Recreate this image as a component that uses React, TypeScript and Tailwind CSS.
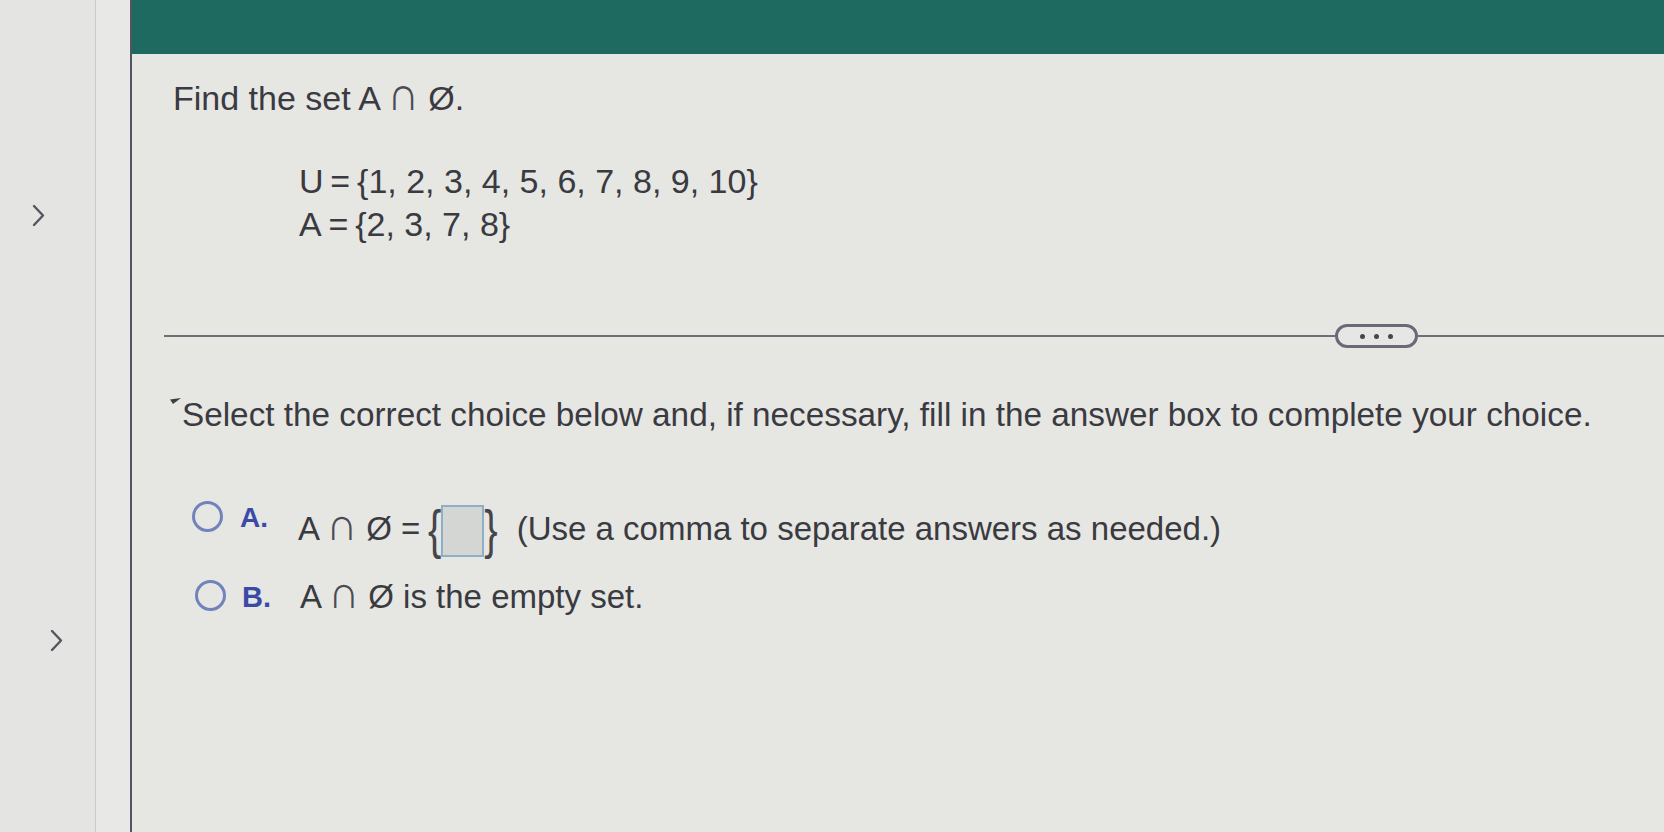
import React from 'react';

const font = { fontFamily: '"Liberation Sans", Arial, sans-serif' };
const mathSym = { fontFamily: '"DejaVu Sans", "Liberation Sans", sans-serif' };

function Chevron({ className }: { className?: string }) {
  return (
    <svg className={className} width="13" height="23" viewBox="0 0 13 23" fill="none">
      <path d="M2 2l9 9.5L2 21" stroke="#55555d" strokeWidth="2.4" strokeLinecap="round" strokeLinejoin="round" />
    </svg>
  );
}

function Radio({ className }: { className?: string }) {
  return <span className={`block w-[31px] h-[31px] rounded-full border-[3px] border-[#7083bb] shrink-0 ${className ?? ''}`} />;
}

// the reference draws ∩ about cap height with a thin stroke
function Cap() {
  return (
    <span style={mathSym} className="inline-block mx-[3px] font-extralight text-[#4b4b53] scale-x-[1.3] scale-y-[1.4] origin-[50%_79%]">
      ∩
    </span>
  );
}

export default function App() {
  return (
    <div className="w-[1664px] h-[832px] flex overflow-hidden bg-[#e4e4e2] text-[#3a3a41]" style={font}>
      {/* left nav rail */}
      <div className="w-[96px] shrink-0 flex flex-col border-r border-[#cacac7]">
        <div className="h-[204px] shrink-0" />
        <Chevron className="ml-[32px]" />
        <div className="h-[402px] shrink-0" />
        <Chevron className="ml-[50px]" />
      </div>
      <div className="w-[36px] shrink-0 bg-[#e8e8e6] border-r-2 border-[#545361]" />

      {/* main */}
      <div className="flex-1 flex flex-col bg-[#e6e6e3]">
        <div className="h-[54px] bg-[#1f6a60] shrink-0" />

        <div className="pl-[41px]">
          <h1 className="mt-[24px] text-[34px] leading-[40px] font-normal">
            Find the set A <Cap /> Ø.
          </h1>

          <div className="ml-[126px] mt-[42px] text-[34px] leading-[43px]">
            <div>U&thinsp;=&thinsp;{'{'}1, 2, 3, 4, 5, 6, 7, 8, 9, 10{'}'}</div>
            <div>A&thinsp;=&thinsp;{'{'}2, 3, 7, 8{'}'}</div>
          </div>
        </div>

        {/* divider with expand pill */}
        <div className="mt-[78px] ml-[32px] flex items-center">
          <div className="w-[1171px] border-t-2 border-[#6e6e79]" />
          <div className="w-[83px] h-[24px] shrink-0 rounded-full border-[3px] border-[#6a6a76] bg-[#e6e7e5] flex items-center justify-center gap-[9px]">
            <span className="w-[5px] h-[5px] rounded-full bg-[#45454f]" />
            <span className="w-[5px] h-[5px] rounded-full bg-[#45454f]" />
            <span className="w-[5px] h-[5px] rounded-full bg-[#45454f]" />
          </div>
          <div className="flex-1 border-t-2 border-[#6e6e79]" />
        </div>

        <p className="mt-[47px] pl-[38px] text-[33.3px] leading-[40px] flex items-start">
          <svg width="11" height="6" viewBox="0 0 11 6" className="mt-[3px] mr-[1px] shrink-0">
            <path d="M0 1.5L11 0 3 6z" fill="#3d3d45" />
          </svg>
          Select the correct choice below and, if necessary, fill in the answer box to complete your choice.
        </p>

        {/* choice A */}
        <div className="mt-[65px] pl-[60px] flex items-start">
          <Radio className="mt-[1px]" />
          <span className="ml-[17px] mt-[2px] w-[58px] font-bold text-[#3a4aa7] text-[28px] leading-[32px]">A.</span>
          <span className="mt-[9px] w-[130px] text-[33px] leading-[40px]">
            A <Cap /> Ø =
          </span>
          <span className="mt-[5px] h-[52px] flex items-center">
            <span className="text-[40px] leading-none scale-y-[1.35] text-[#45454c] mt-[-4px]">{'{'}</span>
            <span className="w-[43px] h-[52px] border-2 border-[#8fafc9] bg-[#d3d6d3]" />
            <span className="text-[40px] leading-none scale-y-[1.35] text-[#45454c] mt-[-4px]">{'}'}</span>
          </span>
          <span className="ml-[19px] mt-[9px] text-[33px] leading-[40px]">(Use a comma to separate answers as needed.)</span>
        </div>

        {/* choice B */}
        <div className="mt-[19px] pl-[63px] flex items-start">
          <Radio className="mt-[4px]" />
          <span className="ml-[16px] mt-[5px] w-[58px] font-bold text-[#3a4aa7] text-[29px] leading-[32px]">B.</span>
          <span className="mt-[1px] text-[33px] leading-[40px]">
            A <Cap /> Ø is the empty set.
          </span>
        </div>
      </div>
    </div>
  );
}
